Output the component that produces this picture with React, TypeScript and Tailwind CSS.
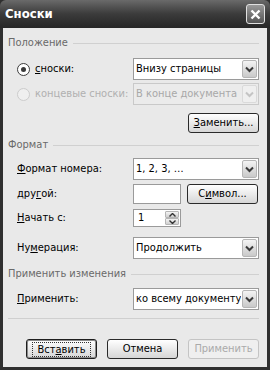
import React from "react";

const font = { fontFamily: '"DejaVu Sans Condensed", "Liberation Sans", sans-serif' };

function Chevron({ disabled }: { disabled?: boolean }) {
  return (
    <svg width="9" height="7" viewBox="0 0 9 7">
      <path d="M1 1.5 L4.5 5 L8 1.5" fill="none" stroke={disabled ? "#c4c4c4" : "#3a3a3a"} strokeWidth="2" />
    </svg>
  );
}

function Select({ value, disabled }: { value: string; disabled?: boolean }) {
  return (
    <div
      className={`flex h-[22px] w-[126px] items-stretch border ${
        disabled ? "border-[#c9c9c9] bg-[#ebebeb] text-[#a8a8a8]" : "border-[#9a9a9a] bg-white text-black"
      }`}
    >
      <div className="flex flex-1 items-center overflow-hidden whitespace-nowrap pl-[2px]">{value}</div>
      <div
        className={`m-px flex w-[15px] items-center justify-center rounded-[2px] border ${
          disabled ? "border-[#dadada] bg-[#efefef]" : "border-[#b5b5b5] bg-gradient-to-b from-[#f4f4f4] to-[#c9c9c9]"
        }`}
      >
        <Chevron disabled={disabled} />
      </div>
    </div>
  );
}

function Btn({ children, primary, disabled }: { children: React.ReactNode; primary?: boolean; disabled?: boolean }) {
  return (
    <div
      className={`flex h-[20px] w-[71px] items-center justify-center rounded-[3px] border ${
        disabled
          ? "border-[#c4c4c4] bg-[#efefef] text-[#aaaaaa]"
          : primary
          ? "border-[#1e1e1e] bg-gradient-to-b from-white to-[#d6d6d6] text-black shadow-[inset_0_0_0_1px_#8a8a8a]"
          : "border-[#2a2a2a] bg-gradient-to-b from-white to-[#d6d6d6] text-black"
      }`}
    >
      {primary ? (
        <span className="border border-dotted border-[#333] px-[5px] leading-[13px]">{children}</span>
      ) : (
        children
      )}
    </div>
  );
}

function Header({ title }: { title: string }) {
  return (
    <div className="flex h-[14px] items-center gap-[5px] pr-[8px] text-[#6a6a6a]">
      <span className="whitespace-nowrap">{title}</span>
      <div className="h-0 flex-1 border-t border-[#d0d0d0]" />
    </div>
  );
}

function Radio({ checked, disabled }: { checked?: boolean; disabled?: boolean }) {
  return (
    <div
      className={`flex h-[13px] w-[13px] items-center justify-center rounded-full border ${
        disabled ? "border-[#cccccc] bg-[#efefef]" : "border-[#3c3c3c] bg-white"
      }`}
    >
      {checked && <div className="h-[5px] w-[5px] rounded-full bg-[#3a3a3a]" />}
    </div>
  );
}

function Row({ label, children, cls = "" }: { label: React.ReactNode; children: React.ReactNode; cls?: string }) {
  return (
    <div className={`flex items-center pl-[9px] ${cls}`}>
      <div className="w-[116px] whitespace-nowrap">{label}</div>
      {children}
    </div>
  );
}

export default function App() {
  return (
    <div className="h-[370px] w-[270px] overflow-hidden bg-[#2f2f2f] text-[11px]" style={font}>
      <div className="flex h-[28px] items-center justify-between rounded-t-[6px] bg-gradient-to-b from-[#6a6a6a] via-[#3b3b3b] to-[#262626] pl-[5px] pr-[5px]">
        <span className="text-[13px] font-bold text-white">Сноски</span>
        <div className="flex h-[20px] w-[19px] items-center justify-center rounded-[3px] border border-[#e0e0e0] bg-gradient-to-b from-[#9a9a9a] to-[#555555]">
          <svg width="11" height="11" viewBox="0 0 11 11">
            <path d="M1.5 1.5 L9.5 9.5 M9.5 1.5 L1.5 9.5" stroke="white" strokeWidth="2.4" />
          </svg>
        </div>
      </div>
      <div className="mx-[3px] h-[339px] bg-[#e9e9e9] pl-[5px] pt-[8px]">
        <Header title="Положение" />
        <div className="mt-[8px] flex items-center pl-[9px]">
          <Radio checked />
          <span className="ml-[5px] w-[98px]"><u>с</u>носки:</span>
          <Select value="Внизу страницы" />
        </div>
        <div className="mt-[3px] flex items-center pl-[9px] text-[#b0b0b0]">
          <Radio disabled />
          <span className="ml-[5px] w-[98px] whitespace-nowrap">концевые сноски:</span>
          <Select value="В конце документа" disabled />
        </div>
        <div className="mt-[8px] flex justify-end pr-[8px]">
          <Btn><span><u>З</u>аменить...</span></Btn>
        </div>
        <div className="mt-[5px]">
          <Header title="Формат" />
        </div>
        <Row label={<span><u>Ф</u>ормат номера:</span>} cls="mt-[6px]">
          <Select value="1, 2, 3, …" />
        </Row>
        <Row label={<span>дру<u>г</u>ой:</span>} cls="mt-[4px]">
          <div className="h-[20px] w-[48px] border border-[#9a9a9a] bg-white" />
          <div className="ml-[6px]">
            <Btn><span>С<u>и</u>мвол...</span></Btn>
          </div>
        </Row>
        <Row label={<span><u>Н</u>ачать с:</span>} cls="mt-[5px]">
          <div className="flex h-[18px] w-[48px] items-stretch border border-[#9a9a9a] bg-white">
            <div className="flex flex-1 items-center pl-[4px]">1</div>
            <div className="m-px flex w-[14px] flex-col">
              {[0, 1].map((i) => (
                <div key={i} className="flex flex-1 items-center justify-center rounded-[1px] border border-[#b5b5b5] bg-gradient-to-b from-[#f4f4f4] to-[#cfcfcf]">
                  <svg width="7" height="4" viewBox="0 0 7 4">
                    <path d={i === 0 ? "M0.5 3.5 L3.5 0.5 L6.5 3.5" : "M0.5 0.5 L3.5 3.5 L6.5 0.5"} fill="none" stroke="#333" strokeWidth="1.4" />
                  </svg>
                </div>
              ))}
            </div>
          </div>
        </Row>
        <Row label={<span>Ну<u>м</u>ерация:</span>} cls="mt-[10px]">
          <Select value="Продолжить" />
        </Row>
        <div className="mt-[8px]">
          <Header title="Применить изменения" />
        </div>
        <Row label={<span><u>П</u>рименить:</span>} cls="mt-[7px]">
          <Select value="ко всему документу" />
        </Row>
        <div className="mr-[8px] mt-[8px] border-t border-[#cfcfcf]" />
        <div className="mt-[20px] flex gap-[10px] pl-[18px]">
          <Btn primary><span>Вст<u>а</u>вить</span></Btn>
          <Btn>Отмена</Btn>
          <Btn disabled>Применить</Btn>
        </div>
      </div>
    </div>
  );
}
